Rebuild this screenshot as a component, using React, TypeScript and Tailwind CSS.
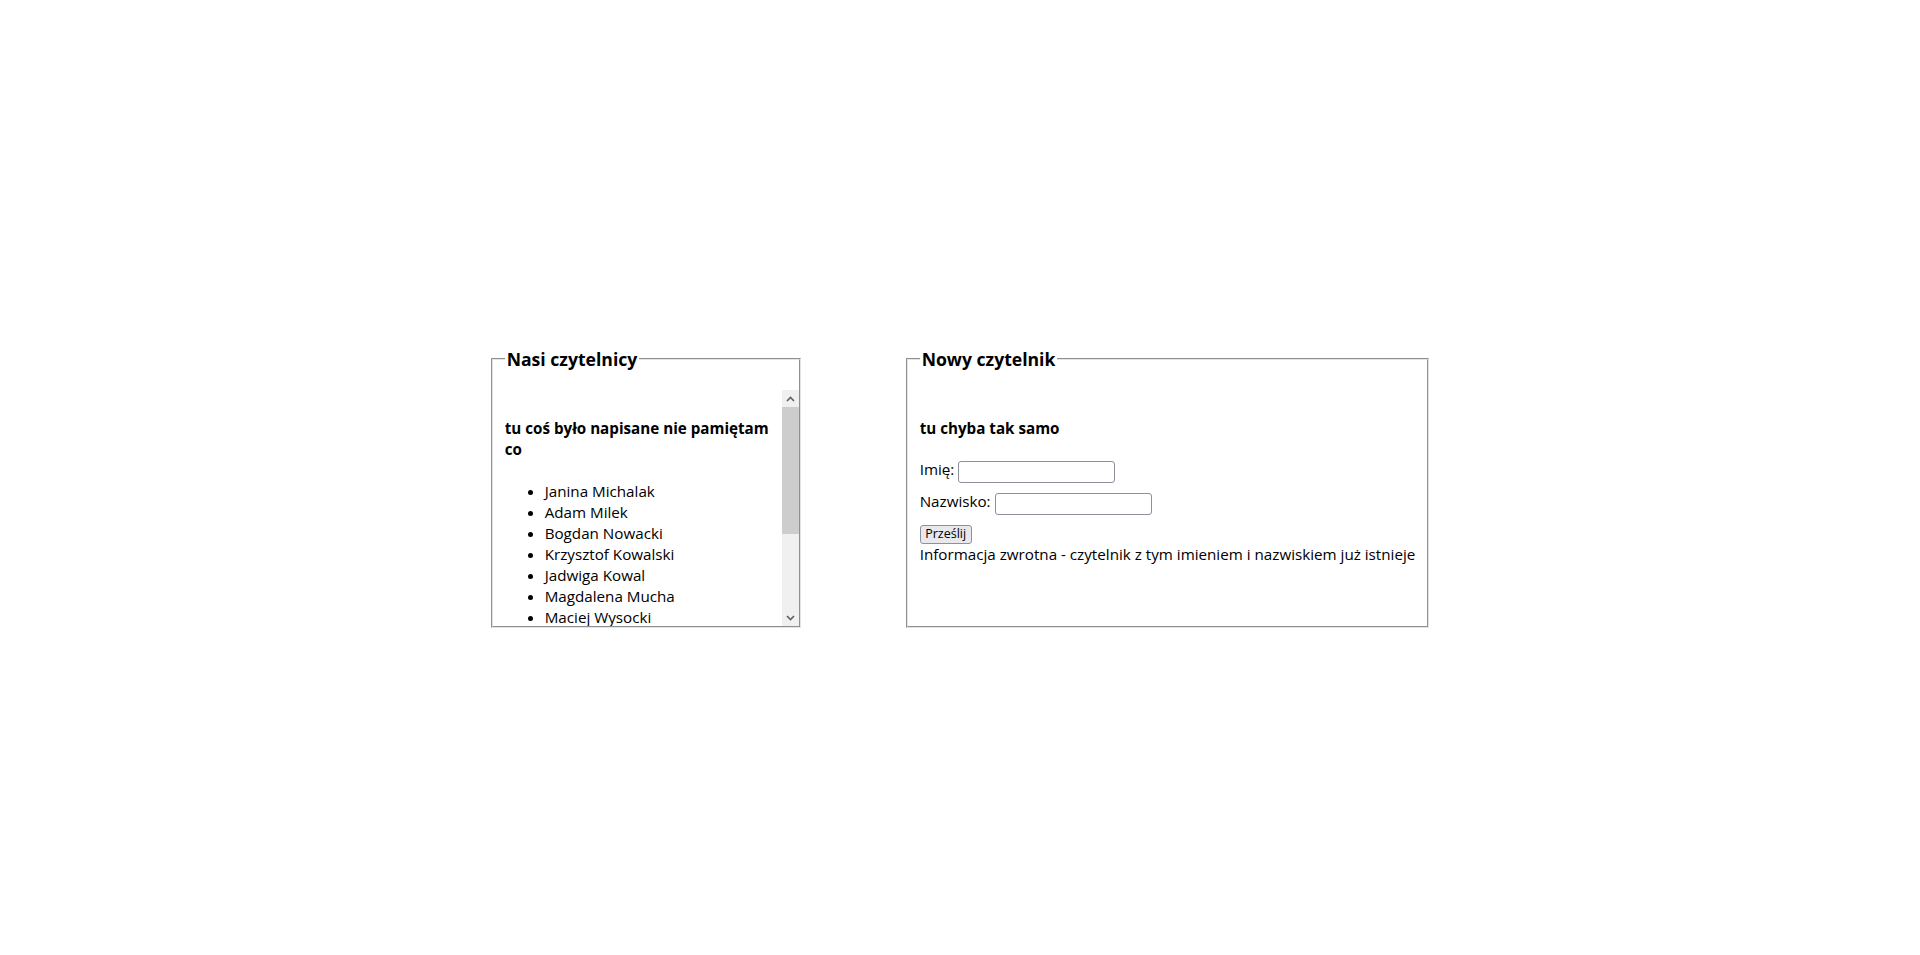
import React from "react";

const readers = [
  "Janina Michalak",
  "Adam Milek",
  "Bogdan Nowacki",
  "Krzysztof Kowalski",
  "Jadwiga Kowal",
  "Magdalena Mucha",
  "Maciej Wysocki",
];

function Chevron({ up }: { up?: boolean }) {
  return (
    <svg width="9" height="6" viewBox="0 0 9 6" className="block">
      <path
        d={up ? "M1 5 L4.5 1.5 L8 5" : "M1 1 L4.5 4.5 L8 1"}
        fill="none"
        stroke="#606060"
        strokeWidth="1.6"
      />
    </svg>
  );
}

export default function App() {
  return (
    <div className="w-full h-[955px] bg-white text-black font-['Open_Sans',sans-serif] text-[15.2px] leading-[21px] flex justify-center items-start gap-[105px] pt-[347px]">
      <fieldset className="w-[310px] border-2 [border-style:groove] border-[#e4e4e4] pl-3 pr-0 pt-[19px] pb-0">
        <legend className="px-[2px] text-[17.6px] font-bold leading-[24px]">Nasi czytelnicy</legend>
        <div className="flex h-[236px]">
          <div className="flex-1 overflow-hidden">
            <h4 className="mt-[28px] font-bold">
              tu coś było napisane nie pamiętam
              <br />
              co
            </h4>
            <ul className="mt-[21px] pl-[40px] list-disc">
              {readers.map((r) => (
                <li key={r}>{r}</li>
              ))}
            </ul>
          </div>
          <div className="w-[17px] flex flex-col bg-[#f0f0f0]">
            <div className="h-[17px] flex items-center justify-center">
              <Chevron up />
            </div>
            <div className="h-[127px] bg-[#cdcdcd]" />
            <div className="flex-1" />
            <div className="h-[17px] flex items-center justify-center">
              <Chevron />
            </div>
          </div>
        </div>
      </fieldset>

      <fieldset className="w-[522px] h-[281px] border-2 [border-style:groove] border-[#e4e4e4] px-3 pt-[19px] pb-0">
        <legend className="px-[2px] text-[17.6px] font-bold leading-[24px]">Nowy czytelnik</legend>
        <h4 className="mt-[28px] font-bold">tu chyba tak samo</h4>
        <div className="mt-[22px] flex items-center h-[22px]">
          <label className="w-[38px] mb-[5px] whitespace-nowrap">Imię:</label>
          <input
            type="text"
            className="w-[157px] h-[22px] border border-[#8f8f9d] rounded-[3px] bg-white px-[2px] text-[13px]"
          />
        </div>
        <div className="mt-[10px] flex items-center h-[22px]">
          <label className="w-[75px] mb-[5px] whitespace-nowrap">Nazwisko:</label>
          <input
            type="text"
            className="w-[157px] h-[22px] border border-[#8f8f9d] rounded-[3px] bg-white px-[2px] text-[13px]"
          />
        </div>
        <button
          type="button"
          className="mt-[10px] w-[52px] h-[19px] flex items-center justify-center border border-[#8f8f9d] rounded-[3px] bg-[#e9e9ed] text-[12.5px] leading-none"
        >
          Prześlij
        </button>
        <p className="whitespace-nowrap">
          Informacja zwrotna - czytelnik z tym imieniem i nazwiskiem już istnieje
        </p>
      </fieldset>
    </div>
  );
}
